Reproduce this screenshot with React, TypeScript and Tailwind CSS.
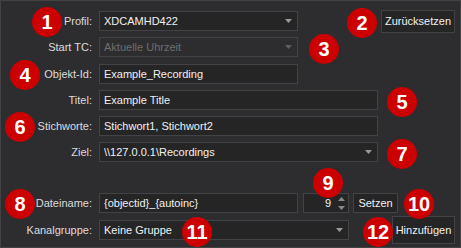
const font = { fontFamily: '"Liberation Sans", Arial, sans-serif' };

function Badge({ n, x, y }: { n: number; x: number; y: number }) {
  return (
    <div
      className="absolute w-[30px] h-[30px] rounded-full bg-[#cc0000] text-white flex items-center justify-center text-[20px] font-bold leading-none"
      style={{ left: x - 15, top: y - 15 }}
    >
      {n}
    </div>
  );
}

function Arrow({ color = "#9a9a9a" }: { color?: string }) {
  return (
    <svg width="7" height="4" viewBox="0 0 7 4" className="shrink-0">
      <path d="M0 0h7L3.5 4z" fill={color} />
    </svg>
  );
}

function Label({ text }: { text: string }) {
  return <div className="w-[91px] shrink-0 text-right text-[#dcdcdc]">{text}</div>;
}

function Field({ value, w, select, disabled }: { value: string; w: string; select?: boolean; disabled?: boolean }) {
  return (
    <div
      className={`${w} h-[20px] ml-[7px] flex items-center pl-[4px] pr-[5px] border border-[#434346] ${
        disabled ? "bg-[#2d2d30] text-[#6d6d6d]" : "bg-[#252526] text-[#f1f1f1]"
      }`}
    >
      <span className="flex-1 truncate">{value}</span>
      {select && <Arrow color={disabled ? "#5e5e5e" : "#9a9a9a"} />}
    </div>
  );
}

function Button({ text, cls }: { text: string; cls: string }) {
  return (
    <div className={`${cls} flex items-center justify-center border border-[#434346] bg-[#252526] text-[#f1f1f1]`}>
      {text}
    </div>
  );
}

export default function App() {
  return (
    <div
      className="relative w-[461px] h-[248px] bg-[#2d2d30] border border-[#434346] text-[11px] overflow-hidden"
      style={font}
    >
      <div className="flex flex-col pt-[10px]">
        <div className="flex items-center h-[20px]">
          <Label text="Profil:" />
          <Field value="XDCAMHD422" w="w-[199px]" select />
          <div className="flex-1" />
          <Button text="Zurücksetzen" cls="w-[74px] h-[23px] mr-[5px]" />
        </div>
        <div className="flex items-center h-[20px] mt-[6px]">
          <Label text="Start TC:" />
          <Field value="Aktuelle Uhrzeit" w="w-[199px]" select disabled />
        </div>
        <div className="flex items-center h-[20px] mt-[7px]">
          <Label text="Objekt-Id:" />
          <Field value="Example_Recording" w="w-[199px]" />
        </div>
        <div className="flex items-center h-[20px] mt-[6px]">
          <Label text="Titel:" />
          <Field value="Example Title" w="w-[279px]" />
        </div>
        <div className="flex items-center h-[20px] mt-[6px]">
          <Label text="Stichworte:" />
          <Field value="Stichwort1, Stichwort2" w="w-[279px]" />
        </div>
        <div className="flex items-center h-[20px] mt-[6px]">
          <Label text="Ziel:" />
          <Field value="\\127.0.0.1\Recordings" w="w-[279px]" select />
        </div>
        <div className="flex items-center h-[20px] mt-[31px]">
          <Label text="Dateiname:" />
          <Field value="{objectid}_{autoinc}" w="w-[199px]" />
          <div className="w-[46px] h-[20px] ml-[5px] flex items-center border border-[#434346] bg-[#252526] text-[#f1f1f1] pr-[3px]">
            <span className="flex-1 text-right pr-[7px]">9</span>
            <div className="flex flex-col gap-[5px]">
              <svg width="7" height="4" viewBox="0 0 7 4">
                <path d="M0 4h7L3.5 0z" fill="#8a8a8a" />
              </svg>
              <svg width="7" height="4" viewBox="0 0 7 4">
                <path d="M0 0h7L3.5 4z" fill="#8a8a8a" />
              </svg>
            </div>
          </div>
          <Button text="Setzen" cls="w-[45px] h-[20px] ml-[4px]" />
        </div>
        <div className="flex items-center h-[20px] mt-[7px]">
          <Label text="Kanalgruppe:" />
          <Field value="Keine Gruppe" w="w-[250px]" select />
          <div className="flex-1" />
          <Button text="Hinzufügen" cls="w-[63px] h-[28px] mr-[5px]" />
        </div>
      </div>

      <Badge n={1} x={46} y={21} />
      <Badge n={2} x={361} y={22} />
      <Badge n={3} x={323} y={48} />
      <Badge n={4} x={24} y={74} />
      <Badge n={5} x={401} y={101} />
      <Badge n={6} x={19} y={126} />
      <Badge n={7} x={401} y={153} />
      <Badge n={8} x={19} y={203} />
      <Badge n={9} x={327} y={182} />
      <Badge n={10} x={418} y={203} />
      <Badge n={11} x={196} y={231} />
      <Badge n={12} x={377} y={231} />
    </div>
  );
}
